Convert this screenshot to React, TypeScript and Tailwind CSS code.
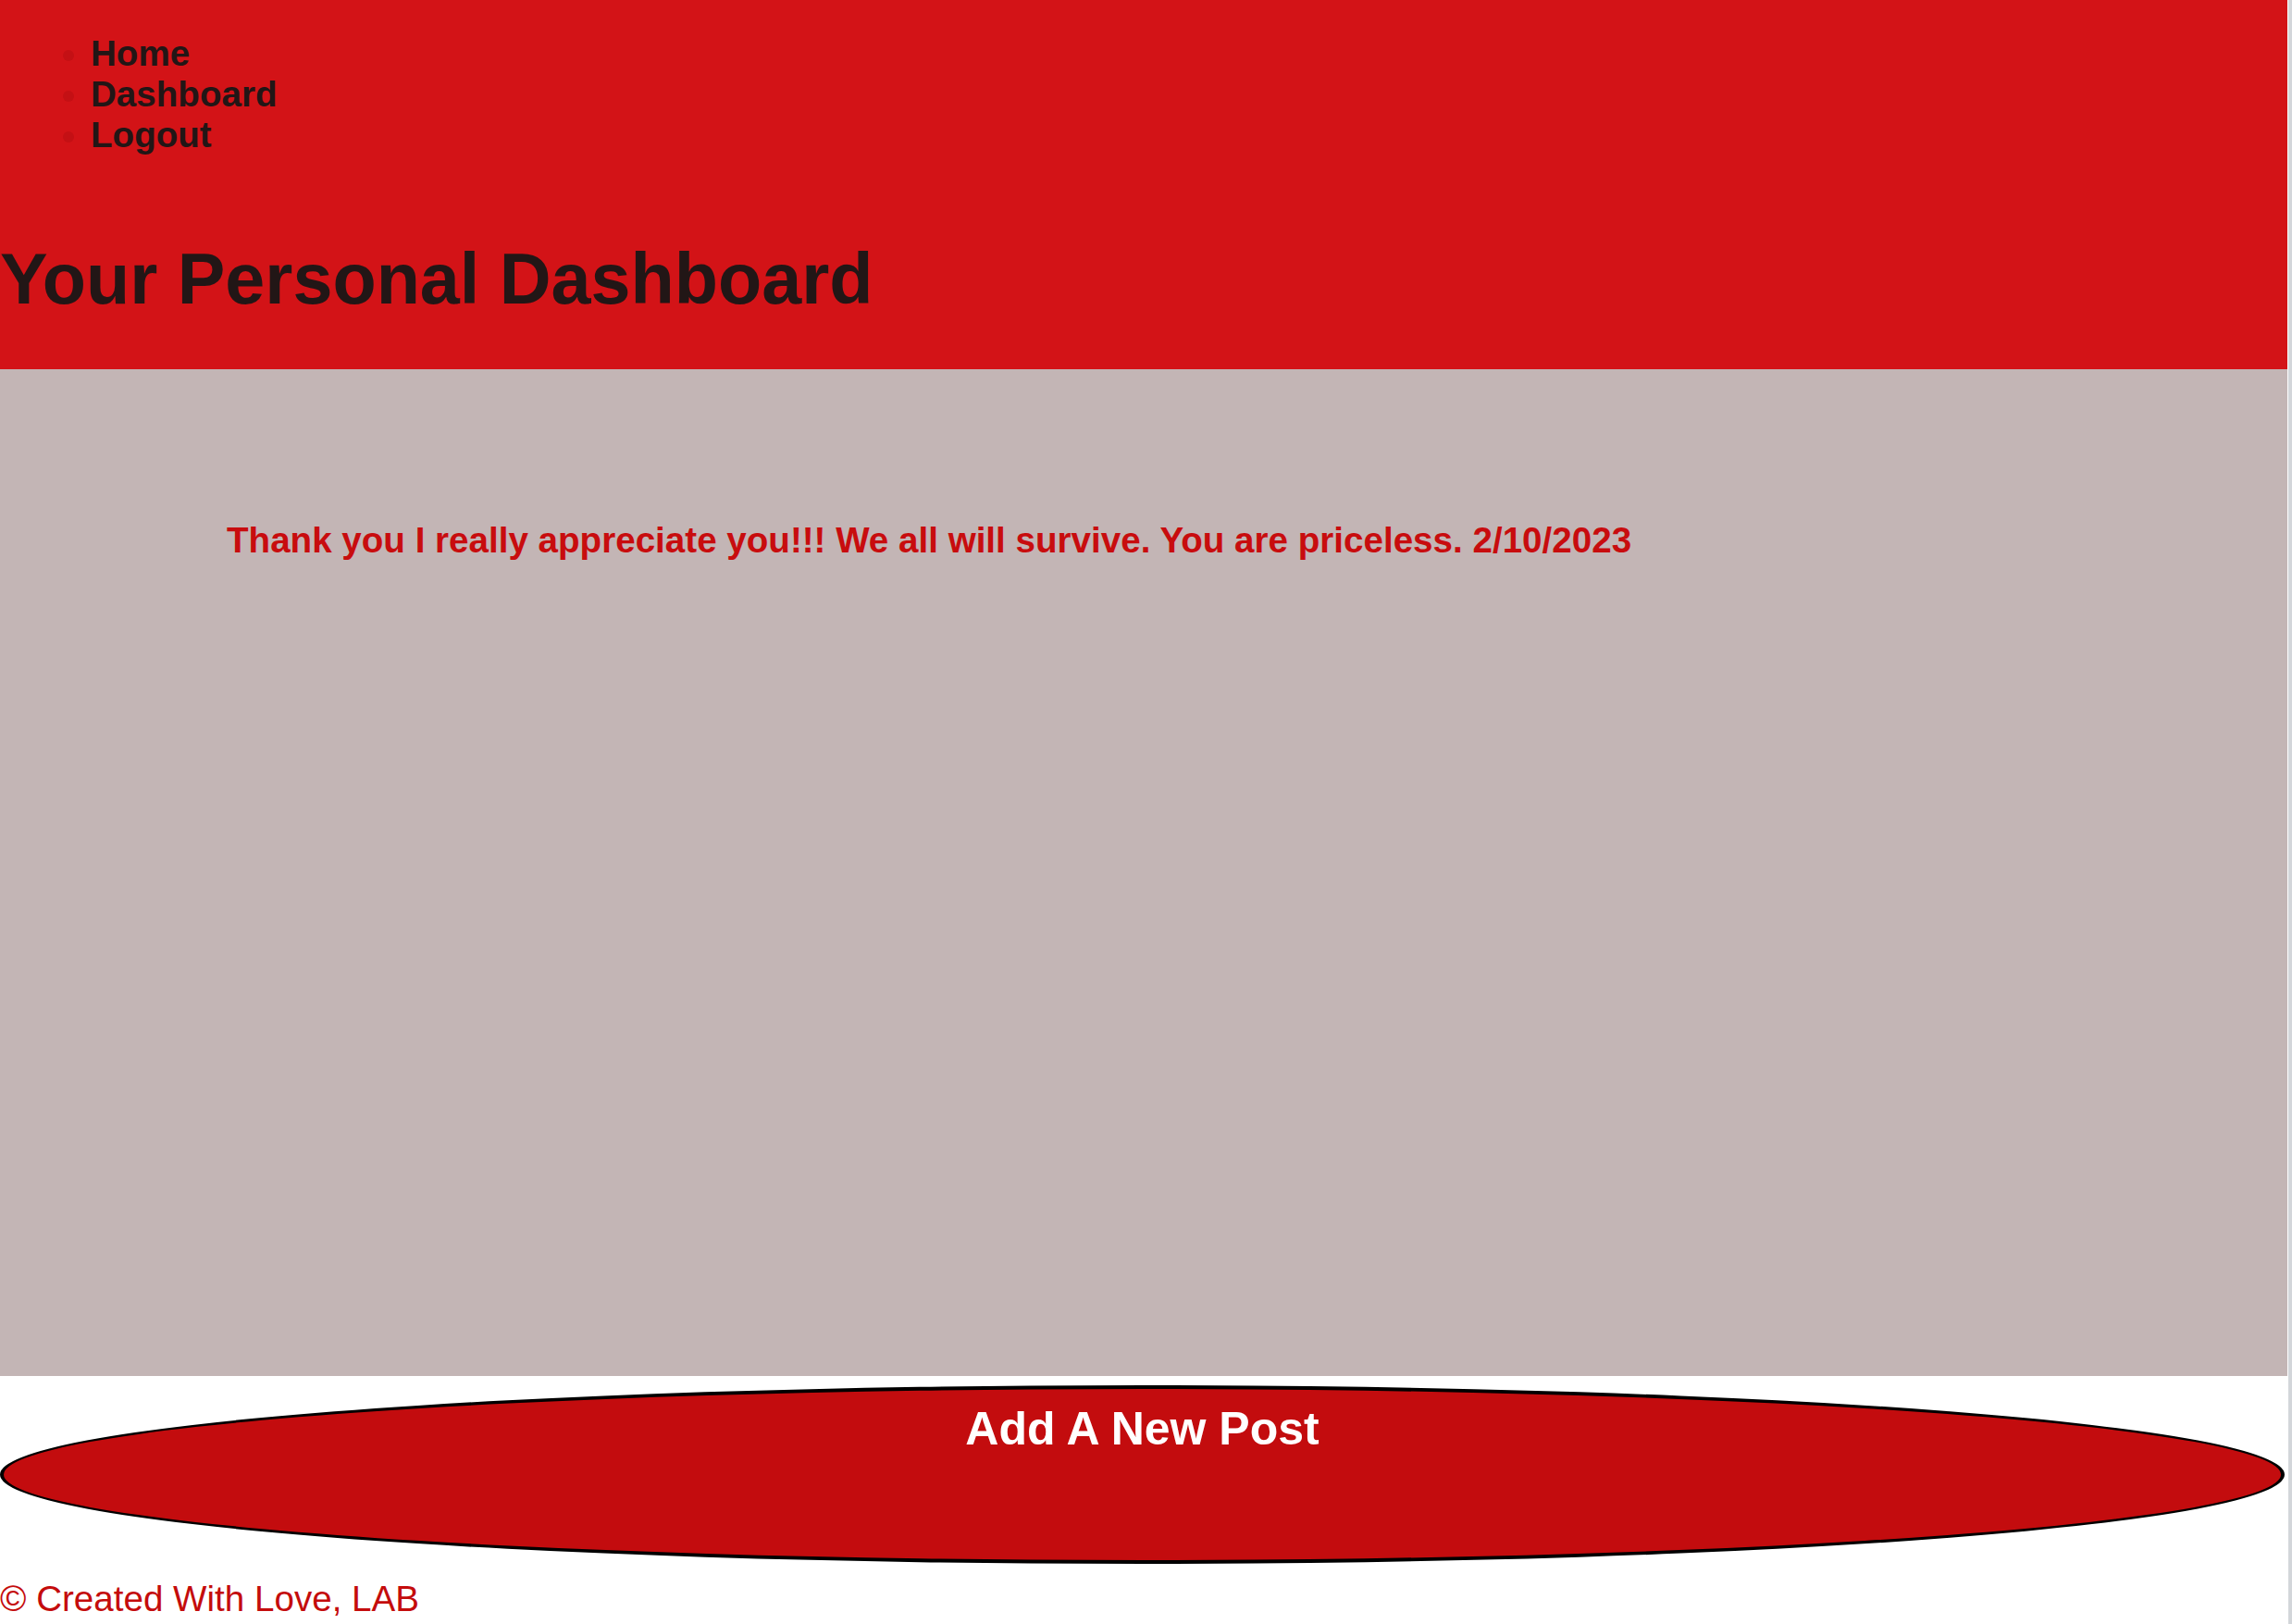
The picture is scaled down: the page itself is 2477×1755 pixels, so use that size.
const navLinks = ["Home", "Dashboard", "Logout"];

const posts = [
  {
    id: 1,
    body: "Thank you I really appreciate you!!! We all will survive. You are priceless.",
    date: "2/10/2023",
  },
];

export default function App() {
  return (
    <div className="flex min-h-screen bg-white font-['Liberation_Sans',Arial,sans-serif]">
      <main className="flex-1 flex flex-col">
        <header className="bg-[#d31317] pt-[36px] pb-[54px]">
          <nav>
            <ul className="list-disc pl-[98px] text-[38.6px] leading-[44px] font-bold marker:text-[#c41014]">
              {navLinks.map((link) => (
                <li key={link}>
                  <a href="#" className="text-[#221616]">
                    {link}
                  </a>
                </li>
              ))}
            </ul>
          </nav>
          <h1 className="mt-[89px] text-[77.3px] leading-[88px] font-bold text-[#221616]">
            Your Personal Dashboard
          </h1>
        </header>

        <section className="h-[1088px] bg-[#c3b5b5] pt-[163px] pl-[245px]">
          {posts.map((p) => (
            <p key={p.id} className="text-[38.6px] leading-[44px] font-bold text-[#c80c0e]">
              {p.body} {p.date}
            </p>
          ))}
        </section>

        <button
          type="button"
          className="mt-[10px] w-[2469px] h-[193px] rounded-[50%] border-[4px] border-black bg-[#c30c0e] pt-[15px] text-[50px] leading-[57px] font-bold text-white flex items-start justify-center"
        >
          Add A New Post
        </button>

        <footer className="mt-[16px] text-[38.6px] leading-[44px] text-[#c40c0c]">
          © Created With Love, LAB
        </footer>
      </main>
      <div className="w-[5px] border-l border-white bg-[#d3d6da]" />
    </div>
  );
}
